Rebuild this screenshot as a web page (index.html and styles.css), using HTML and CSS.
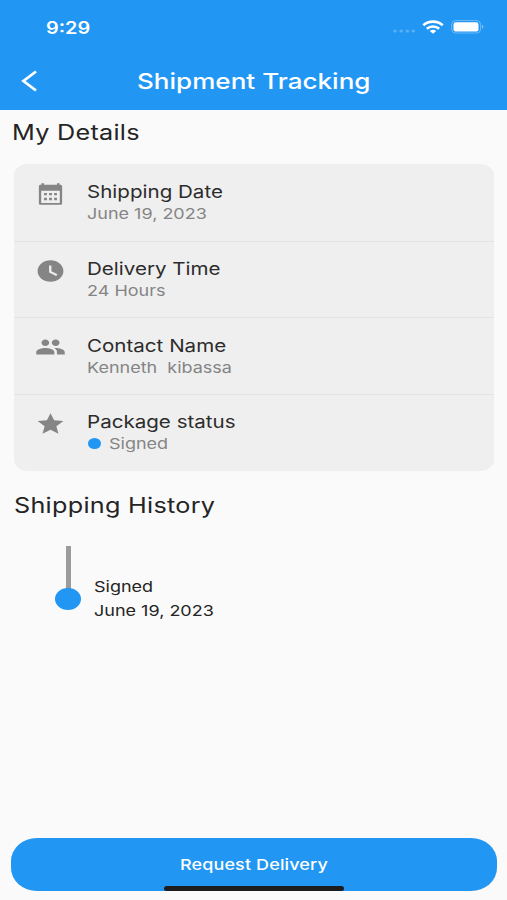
FILE: index.html
```html
<!DOCTYPE html>
<html lang="en">
<head>
<meta charset="utf-8">
<title>Shipment Tracking</title>
<link rel="stylesheet" href="styles.css">
</head>
<body>
<header class="header">
  <div class="status">
    <span class="wide time">9:29</span>
    <div class="indicators">
      <svg class="dots" width="22" height="4" viewBox="0 0 22 4"><g fill="#fff" opacity=".25"><ellipse cx="2" cy="2" rx="1.8" ry="1.5"/><ellipse cx="8.2" cy="2" rx="1.8" ry="1.5"/><ellipse cx="14.4" cy="2" rx="1.8" ry="1.5"/><ellipse cx="20.2" cy="2" rx="1.8" ry="1.5"/></g></svg>
      <svg class="wifi" width="22" height="14" viewBox="0 0 22 14"><g fill="none" stroke="#fff" stroke-width="2.6"><path d="M1.300 5.200C6.700.4 15.300.4 20.700 5.200"/><path d="M4.800 8.800C8.300 5.700 13.700 5.700 17.200 8.800"/></g><path fill="#fff" d="M7.800 11c1.900-1.600 4.500-1.600 6.400 0L11 13.800z"/></svg>
      <svg class="battery" width="34" height="14" viewBox="0 0 34 14"><rect x=".6" y=".6" width="29" height="12.400" rx="4" fill="none" stroke="#fff" stroke-opacity=".35"/><rect x="2.500" y="2.200" width="25" height="9.200" rx="2.200" fill="#fff"/><path d="M31 4.800q3 2 0 4z" fill="#fff" opacity=".45"/></svg>
    </div>
  </div>
  <nav class="nav">
    <svg class="back" width="18" height="22" viewBox="0 0 18 22"><path d="M16 1.500 3.500 11l12.500 9.500" fill="none" stroke="#fff" stroke-width="2.800"/></svg>
    <h1 class="wide title">Shipment Tracking</h1>
  </nav>
</header>
<main class="content">
  <h2 class="wide heading">My Details</h2>
  <section class="card">
    <div class="row">
      <svg class="icon" viewBox="0 0 24 24" preserveAspectRatio="none"><path fill-rule="evenodd" d="M5 3.500V2h2v1.500h10V2h2v1.500h.5c1 0 1.500.6 1.500 1.500v15.500c0 1-.5 1.500-1.500 1.500h-15c-1 0-1.500-.5-1.500-1.500V5c0-.9.5-1.500 1.500-1.500zM4.800 9v11.200h14.400V9zM7 11h2.200v2.200H7zm3.900 0h2.200v2.200h-2.200zm3.900 0H17v2.200h-2.200zM7 15.500h2.200v2.200H7zm3.900 0h2.200v2.200h-2.200zm3.900 0H17v2.200h-2.200z"/></svg>
      <div class="info"><span class="wide label">Shipping Date</span><span class="wide value">June 19, 2023</span></div>
    </div>
    <div class="row">
      <svg class="icon" viewBox="0 0 24 24" preserveAspectRatio="none"><path d="M12 2C6.500 2 2 6.500 2 12s4.500 10 10 10 10-4.500 10-10S17.500 2 12 2zm4.400 14.600L10.900 13.300V7h1.800v5.200l4.700 2.800z"/></svg>
      <div class="info"><span class="wide label">Delivery Time</span><span class="wide value">24 Hours</span></div>
    </div>
    <div class="row">
      <svg class="icon" viewBox="0 0 24 24" preserveAspectRatio="none"><path d="M16 11c1.660 0 2.990-1.340 2.990-3S17.660 5 16 5s-3 1.340-3 3 1.340 3 3 3zm-8 0c1.660 0 2.990-1.340 2.990-3S9.660 5 8 5 5 6.340 5 8s1.340 3 3 3zm0 2c-2.330 0-7 1.170-7 3.500V19h14v-2.500c0-2.330-4.670-3.500-7-3.500zm8 0c-.29 0-.62.02-.97.05 1.160.84 1.970 1.970 1.970 3.450V19h6v-2.500c0-2.330-4.670-3.500-7-3.500z"/></svg>
      <div class="info"><span class="wide label">Contact Name</span><span class="wide value">Kenneth&nbsp; kibassa</span></div>
    </div>
    <div class="row">
      <svg class="icon" viewBox="0 0 24 24" preserveAspectRatio="none"><path d="M12 17.270 18.180 21l-1.640-7.030L22 9.240l-7.190-.61L12 2 9.190 8.630 2 9.240l5.460 4.730L5.820 21z"/></svg>
      <div class="info"><span class="wide label">Package status</span><div class="signed"><i class="dot"></i><span class="wide value">Signed</span></div></div>
    </div>
  </section>
  <h2 class="wide heading history-heading">Shipping History</h2>
  <section class="history">
    <div class="track"><i class="line"></i><i class="node"></i></div>
    <div class="event"><span class="wide">Signed</span><span class="wide">June 19, 2023</span></div>
  </section>
</main>
<footer class="footer">
  <button class="request"><span class="wide">Request Delivery</span></button>
  <i class="home"></i>
</footer>
</body>
</html>
```
FILE: styles.css
```css
* { box-sizing: border-box; }
body {
  margin: 0;
  width: 507px;
  height: 900px;
  display: flex;
  flex-direction: column;
  overflow: hidden;
  background: #fafafa;
  color: #242424;
  font-family: Inter, "Liberation Sans", sans-serif;
}
h1, h2 { margin: 0; font-weight: 400; }
svg, i { display: block; flex: none; }

/* Extended letterforms */
.wide {
  display: block;
  width: max-content;
  white-space: nowrap;
  transform: scaleX(1.2);
  transform-origin: left center;
}

.header { height: 110px; background: #2196f3; color: #fff; }
.status {
  height: 54px;
  padding: 1px 22px 0 46px;
  display: flex;
  align-items: center;
  justify-content: space-between;
}
.time { font-size: 17px; font-weight: 600; transform: scaleX(1.17); }
.indicators { display: flex; align-items: center; margin-top: -1px; }
.dots { margin: 8px 7px 0 0; }
.wifi { margin-right: 7px; }
.nav { height: 54px; display: flex; align-items: center; padding-left: 20px; }
.title { margin-left: 99px; font-size: 22px; font-weight: 500; line-height: 30px; transform: scaleX(1.185); }

.content { flex: 1; padding: 9px 13px 0 14px; }
.heading { font-size: 21px; line-height: 28px; margin-left: -2px; letter-spacing: .23px; }
.card { margin-top: 17px; border-radius: 14px / 11px; background: #efefef; overflow: hidden; height: 306.500px; }
.row { height: 76.700px; display: flex; padding: 16px 0 0 21px; }
.row + .row { border-top: 1px solid #e4e4e4; padding-top: 15.500px; margin-top: -.1px; }
.icon { width: 31px; height: 26px; margin: 1px 21px 0 0; fill: #858585; }
.row + .row .icon { margin-top: .5px; }
.label { font-size: 17.500px; line-height: 23px; color: #2c2c2c; transform: scaleX(1.175); }
.value { font-size: 15px; line-height: 21px; color: #858585; }
.signed { display: flex; align-items: center; gap: 8px; }
.dot { width: 13px; height: 11px; margin-left: 1px; border-radius: 50%; background: #2196f3; }
.history-heading { margin: 21px 0 0; }
.history { display: flex; margin-top: 26px; padding-left: 41px; }
.track { width: 26px; display: flex; flex-direction: column; align-items: center; }
.line { width: 5px; height: 43px; background: #9b9b9b; }
.node { width: 26px; height: 22px; margin-top: -1px; border-radius: 50%; background: #2196f3; }
.event { margin: 29.500px 0 0 13px; font-size: 15px; line-height: 23.500px; }

.footer { height: 62px; padding: 0 11px; position: relative; }
.request {
  display: flex;
  width: 485.500px;
  height: 53px;
  padding: 0 0 0 169px;
  align-items: center;
  border: 0;
  border-radius: 26px / 23px;
  background: #2196f3;
  color: #fff;
  font: 500 15px/20px Inter, sans-serif;
  letter-spacing: .1px;
}
.home {
  position: absolute;
  left: 164px;
  top: 48px;
  width: 180px;
  height: 5px;
  border-radius: 3px;
  background: #1d1d1f;
}
```
